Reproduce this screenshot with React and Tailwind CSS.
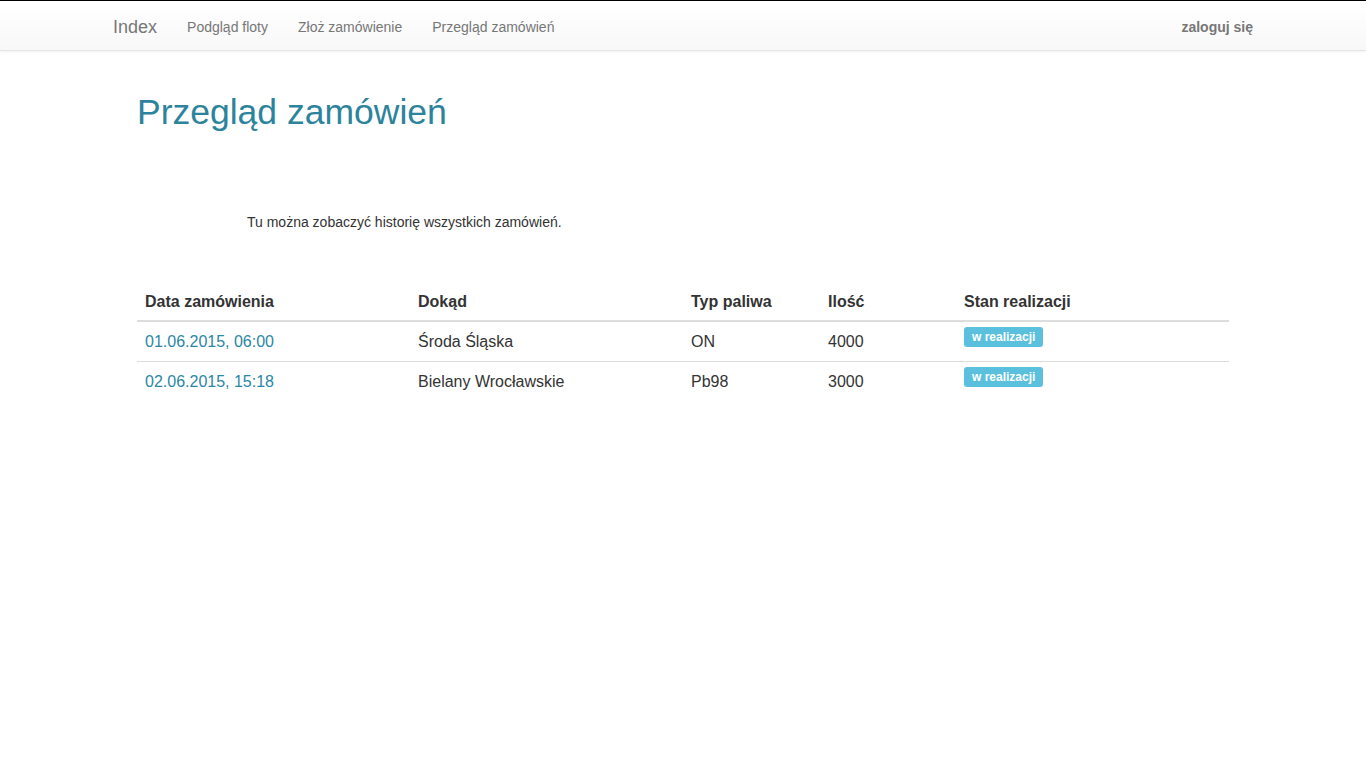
const orders = [
  { date: "01.06.2015, 06:00", dest: "Środa Śląska", fuel: "ON", qty: "4000", status: "w realizacji" },
  { date: "02.06.2015, 15:18", dest: "Bielany Wrocławskie", fuel: "Pb98", qty: "3000", status: "w realizacji" },
];

const App = () => {
  return (
    <div className="min-h-screen bg-white text-[#333] font-['Liberation_Sans',Arial,sans-serif]">
      <nav className="border-t border-black border-b border-b-[#e5e5e5] bg-gradient-to-b from-white to-[#f8f8f8] shadow-[0_1px_3px_rgba(0,0,0,0.06)]">
        <div className="mx-auto flex h-[49px] w-[1170px] items-center justify-between px-[15px] pt-[3px]">
          <div className="flex items-center">
            <a className="pr-[15px] text-[18px] text-[#777]">Index</a>
            <a className="px-[15px] text-[14px] text-[#777]">Podgląd floty</a>
            <a className="px-[15px] text-[14px] text-[#777]">Złoż zamówienie</a>
            <a className="px-[15px] text-[14px] text-[#777]">Przegląd zamówień</a>
          </div>
          <a className="text-[14px] font-bold text-[#777]">zaloguj się</a>
        </div>
      </nav>

      <main className="mx-[137px] mt-[41px]">
        <h1 className="text-[35.5px] leading-[40px] text-[#2c849c]">Przegląd zamówień</h1>

        <p className="ml-[110px] mt-[80px] text-[14px] leading-[20px] text-[#333]">
          Tu można zobaczyć historię wszystkich zamówień.
        </p>

        <table className="mt-[48px] w-full border-collapse text-left text-[16px]">
          <thead>
            <tr className="border-b-2 border-[#ddd]">
              <th className="w-[273px] px-2 pt-[10px] pb-[6px] font-bold leading-6">Data zamówienia</th>
              <th className="w-[273px] px-2 pt-[10px] pb-[6px] font-bold leading-6">Dokąd</th>
              <th className="w-[137px] px-2 pt-[10px] pb-[6px] font-bold leading-6">Typ paliwa</th>
              <th className="w-[136px] px-2 pt-[10px] pb-[6px] font-bold leading-6">Ilość</th>
              <th className="px-2 pt-[10px] pb-[6px] font-bold leading-6">Stan realizacji</th>
            </tr>
          </thead>
          <tbody>
            {orders.map((o) => (
              <tr key={o.date} className="border-b border-[#ddd] last:border-0">
                <td className="px-2 pt-2 pb-[7px] leading-6">
                  <a className="text-[#2a87a5]">{o.date}</a>
                </td>
                <td className="px-2 pt-2 pb-[7px] leading-6">{o.dest}</td>
                <td className="px-2 pt-2 pb-[7px] leading-6">{o.fuel}</td>
                <td className="px-2 pt-2 pb-[7px] leading-6">{o.qty}</td>
                <td className="px-2 pt-[5px] pb-2 align-top">
                  <span className="block w-fit rounded-[3px] bg-[#5bc0de] px-[8px] text-[12px] font-bold leading-[20px] text-white">
                    {o.status}
                  </span>
                </td>
              </tr>
            ))}
          </tbody>
        </table>
      </main>
    </div>
  );
};

export default App;
